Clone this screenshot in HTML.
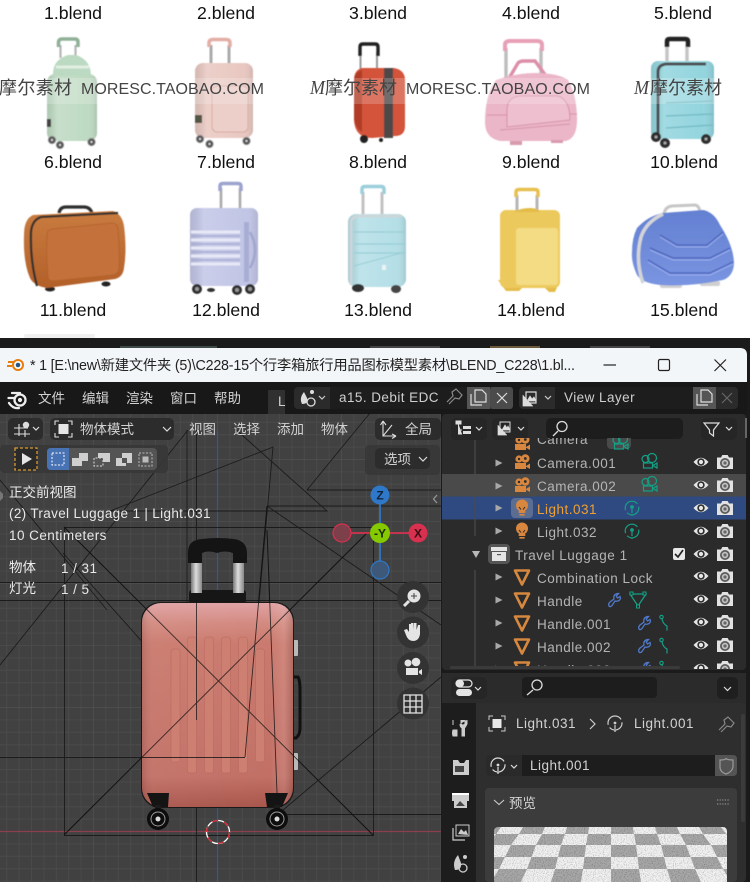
<!DOCTYPE html>
<html lang="zh"><head><meta charset="utf-8"><title>Blend</title>
<style>
html,body{margin:0;padding:0;background:#fff;width:750px;height:882px;overflow:hidden}
svg{display:block}
.lb{font:17.7px "Liberation Sans","Noto Sans CJK SC",sans-serif;fill:#111;text-anchor:middle}
.wm{font-family:"Liberation Sans","Noto Sans CJK SC",sans-serif;fill:#444}
.ui{font-family:"Liberation Sans","Noto Sans CJK SC",sans-serif;font-size:13.5px;fill:#cfcfcf;letter-spacing:.45px}
.cn{font-family:"Noto Sans CJK SC","Liberation Sans",sans-serif;font-size:13.5px;fill:#d2d2d2}
.ov{font-family:"Liberation Sans","Noto Sans CJK SC",sans-serif;font-size:13.5px;fill:#e8e8e8;letter-spacing:.45px}
.row{font-family:"Liberation Sans",sans-serif;font-size:13.5px;fill:#b4b4b4;letter-spacing:.5px}
</style></head><body>
<svg width="750" height="882" viewBox="0 0 750 882" xmlns="http://www.w3.org/2000/svg">
<defs>
<pattern id="grid" width="124" height="124" patternUnits="userSpaceOnUse" x="93.500" y="87.500">
 <rect width="124" height="124" fill="#414141"/>
 <path d="M12.400 0V124M24.800 0V124M37.200 0V124M49.600 0V124M62 0V124M74.400 0V124M86.800 0V124M99.200 0V124M111.600 0V124M0 12.400H124M0 24.800H124M0 37.200H124M0 49.600H124M0 62H124M0 74.400H124M0 86.800H124M0 99.200H124M0 111.600H124" stroke="#4a4a4a" stroke-width="1" fill="none"/>
 <path d="M0 0V124M0 0H124" stroke="#565656" stroke-width="1" fill="none"/>
</pattern>
<linearGradient id="gBody" x1="0" y1="0" x2="0" y2="1"><stop offset="0" stop-color="#e0a2a4"/><stop offset=".1" stop-color="#d38a80"/><stop offset=".2" stop-color="#ca7a6e"/><stop offset=".85" stop-color="#c27066"/><stop offset="1" stop-color="#a9564c"/></linearGradient>
<linearGradient id="gSide" x1="0" y1="0" x2="1" y2="0"><stop offset="0" stop-color="#000" stop-opacity=".1"/><stop offset=".07" stop-color="#fff" stop-opacity=".04"/><stop offset=".85" stop-color="#fff" stop-opacity="0"/><stop offset=".94" stop-color="#fff" stop-opacity=".1"/><stop offset="1" stop-color="#000" stop-opacity=".12"/></linearGradient>
<linearGradient id="gPole" x1="0" y1="0" x2="1" y2="0"><stop offset="0" stop-color="#777"/><stop offset=".45" stop-color="#ddd"/><stop offset="1" stop-color="#888"/></linearGradient>
<linearGradient id="shade" x1="0" y1="0" x2="1" y2="0"><stop offset="0" stop-color="#000" stop-opacity=".08"/><stop offset=".2" stop-color="#fff" stop-opacity=".14"/><stop offset=".8" stop-color="#fff" stop-opacity="0"/><stop offset="1" stop-color="#000" stop-opacity=".1"/></linearGradient>
<linearGradient id="gBrown" x1="0" y1="0" x2="0" y2="1"><stop offset="0" stop-color="#c97c3f"/><stop offset="1" stop-color="#b3602a"/></linearGradient>
<linearGradient id="gBlue" x1="0" y1="0" x2="0" y2="1"><stop offset="0" stop-color="#6480d2"/><stop offset=".5" stop-color="#6e8ad8"/><stop offset="1" stop-color="#7a95e2"/></linearGradient>
<filter id="soft"><feGaussianBlur stdDeviation=".45"/></filter>
<filter id="noise" x="0" y="0" width="100%" height="100%" color-interpolation-filters="sRGB"><feTurbulence type="fractalNoise" baseFrequency=".9" numOctaves="1" seed="3" result="t"/><feColorMatrix in="t" values=".7 0 0 0 .62 .7 0 0 0 .62 .7 0 0 0 .62 0 0 0 0 1" result="g"/><feBlend in="g" in2="SourceGraphic" mode="multiply"/></filter>
<clipPath id="prev"><rect x="494" y="827" width="233" height="60" rx="4"/></clipPath>
<clipPath id="outl"><rect x="442" y="438" width="304" height="231"/></clipPath>

<g id="eye"><path d="M-7.500 0Q0-8.500 7.500 0Q0 8.500-7.500 0Z" fill="#e6e6e6"/><circle r="3.700" fill="#2c2c2c"/><circle r="2.100" fill="#e6e6e6"/></g>
<g id="cam"><path d="M-8-4.500H-4L-2.700-7H2.700L4-4.500H8V7H-8Z" fill="#e2e2e2"/><circle cy="1" r="5" fill="#5c5c5c"/><circle cy="1" r="3.200" fill="#c4c4c4"/><circle cy="1" r="1.600" fill="#666"/></g>
<g id="cami"><circle cx="-3" cy="-4" r="3.600" fill="#d9873f"/><circle cx="3.300" cy="-4.500" r="4.200" fill="#d9873f"/><circle cx="-3" cy="-4" r="1.200" fill="#2b2b2b"/><circle cx="3.300" cy="-4.500" r="1.400" fill="#2b2b2b"/><rect x="-7" y="0" width="11" height="6" fill="#d9873f"/><path d="M4 3L8 .5V6L4 3.800Z" fill="#d9873f"/></g>
<g id="camg" fill="none" stroke="#14a085" stroke-width="1.200"><circle cx="-3.500" cy="-3" r="3.500"/><circle cx="3" cy="-4" r="4.500"/><rect x="-5.500" y="1" width="9" height="5"/><path d="M4 3.500L8 1V6Z"/></g>
<g id="mesh"><path d="M-7-6.500H7L0 7.500Z" fill="none" stroke="#d6883f" stroke-width="2.600" stroke-linejoin="round"/></g>
<g id="bulb"><circle cy="-2.500" r="6" fill="#d9873f"/><path d="M-3-1L-1 1.500M3-1L1 1.500" stroke="#2b2b2b" stroke-width="1"/><rect x="-3.300" y="3" width="6.600" height="2" fill="#d9873f"/><rect x="-2.600" y="6" width="5.200" height="1.600" fill="#d9873f"/></g>
<g id="lightg" fill="none" stroke="#14a085" stroke-width="1.200"><circle r="6.800" stroke-dasharray="16 3 19 3"/><circle cy="-1" r="1.300" fill="#14a085"/><path d="M0 1V5M0 6.500V8"/></g>
<g id="wrench"><path d="M-6 6Q-7 4-5 2L-1-1Q-2-5 2-6.500L3.500-6.500 1.200-4 2.500-2 5-3.500 5.500-1.500Q4 2 0 1L-3 5.500Q-5 7.500-6 6Z" fill="none" stroke="#5079c9" stroke-width="1.300"/></g>
<g id="curve"><circle cx="-2.500" cy="-6" r="1.700" fill="none" stroke="#14a085" stroke-width="1.100"/><path d="M-2-4Q-1 1 3 3V7.500" fill="none" stroke="#14a085" stroke-width="1.200"/></g>
<g id="arrow"><path d="M-3.500-3.500L3.500 0L-3.500 3.500Z" fill="#a8a8a8"/></g>
<g id="wh"><circle r="3.600" fill="#4d4d4d" stroke="#8a8a8a" stroke-width="1"/><circle r="1.200" fill="#d5d5d5"/></g>
</defs>

<rect width="750" height="338" fill="#fff"/>
<text class="lb" x="73" y="19">1.blend</text><text class="lb" x="226" y="19">2.blend</text><text class="lb" x="378" y="19">3.blend</text><text class="lb" x="531" y="19">4.blend</text><text class="lb" x="683" y="19">5.blend</text>

<g filter="url(#soft)">
<!-- 6 green -->
<g>
<path d="M60.500 58V45M75.500 58V45" stroke="#b5b5b5" stroke-width="2.200"/>
<path d="M58.500 47V42Q59 39 62 39H75Q78 39 78 42V47" fill="none" stroke="#8fb097" stroke-width="3.500"/>
<rect x="47" y="74" width="50" height="67" rx="8" fill="#bedac2"/>
<rect x="47" y="74" width="50" height="67" rx="8" fill="url(#shade)"/>
<path d="M53 76Q52 60 68 55H76Q91 60 91 76Z" fill="#bcd9c2"/><path d="M56 67H89" stroke="#e2efe3" stroke-width="3"/>
<use href="#wh" x="52" y="140"/><use href="#wh" x="60" y="145"/><use href="#wh" x="91.500" y="142"/>
<rect x="47" y="119" width="4" height="8" fill="#444"/>
</g>
<!-- 7 pink -->
<g>
<path d="M211 64V45M229 64V45" stroke="#aaa" stroke-width="3"/><path d="M209 47V43Q209 39.500 213 39.500H226Q230 39.500 230 43V47" fill="none" stroke="#e3aea5" stroke-width="3.500"/>
<rect x="195" y="63" width="58" height="75" rx="8" fill="#e9c8c1"/><rect x="195" y="63" width="58" height="75" rx="8" fill="url(#shade)"/>
<rect x="212" y="86" width="36" height="46" rx="5" fill="#eccfc9" stroke="#d9aaa3"/>
<use href="#wh" x="200" y="139"/><use href="#wh" x="209.500" y="144"/><use href="#wh" x="246.500" y="141"/>
<rect x="195" y="115" width="7" height="8" fill="#554"/>
</g>
<!-- 8 red -->
<g>
<path d="M360.500 72V52M377 72V52" stroke="#999" stroke-width="2"/>
<path d="M360 56V47Q360 44 363 44H375Q378 44 378 47V56" fill="none" stroke="#222" stroke-width="3.400"/>
<path d="M362 68H394Q405 70 405 80V126Q405 136 395 136L372 138Q355 138 354 120V80Q354 70 362 68Z" fill="#d4523a"/>
<rect x="384" y="68" width="9" height="70" fill="#4d4a48"/>
<path d="M354 82Q354 72 362 70V132Q355 128 354 118Z" fill="#b13c27"/>
<circle cx="364" cy="139" r="4" fill="#222"/><circle cx="381" cy="140" r="2" fill="#222"/>
</g>
<!-- 9 bag -->
<g>
<path d="M506 82V48M541 82V48" stroke="#bdbdbd" stroke-width="3.400"/>
<path d="M505 51V45Q505 41 510 41H537Q542 41 542 45V51" fill="none" stroke="#e7a0b6" stroke-width="4"/>
<path d="M508 80L518 63Q520 61 524 61H535L549 80" fill="none" stroke="#dc8fa8" stroke-width="3.400"/>
<path d="M496 80Q516 73 535 73Q558 73 568 80Q577 95 577 120Q577 138 566 141H500Q485 138 485 122Q485 95 496 80Z" fill="#ebb6c8"/>
<path d="M507 127V110Q507 95 525 96H558Q570 100 570 120L507 127Z" fill="#eebfce" stroke="#d693a9"/>
<path d="M487 115H507M569 114H577M500 130L570 124" stroke="#d693a9" fill="none"/>
<rect x="510" y="141" width="12" height="4" fill="#d89bae"/><rect x="551" y="140" width="12" height="3" fill="#d89bae"/>
</g>
<!-- 10 teal -->
<g>
<path d="M667 62V44M687 62V44" stroke="#c5c5c5" stroke-width="3.400"/>
<path d="M667 47V41Q667 39 670 39H685Q688 39 688 41V47" fill="none" stroke="#222" stroke-width="4.500"/>
<rect x="651" y="61" width="63" height="78" rx="7" fill="#93d5de"/><rect x="651" y="61" width="63" height="78" rx="7" fill="url(#shade)"/>
<path d="M658 136V72Q658 65 666 64H706" fill="none" stroke="#4d5052" stroke-width="3"/>
<path d="M666 103L713 101M666 116L713 114M666 128L713 125" stroke="#72b9c3" stroke-width="1.300" fill="none"/>
<g fill="#2d2d2d"><circle cx="656" cy="137" r="5"/><circle cx="665" cy="143" r="5"/><circle cx="706" cy="139" r="5"/></g><g fill="#aaa"><circle cx="656" cy="137" r="1.500"/><circle cx="665" cy="143" r="1.500"/><circle cx="706" cy="139" r="1.500"/></g>
</g>
<!-- 11 brown -->
<g>
<ellipse cx="50" cy="289" rx="5" ry="2.500" fill="#222"/><ellipse cx="106" cy="284" rx="4.500" ry="2.500" fill="#222"/>
<path d="M59 213Q60 207 66 207H84Q90 207 92 213" fill="none" stroke="#2e2e2e" stroke-width="3.200"/>
<path d="M33 215Q24 219 24 235Q23 262 30 278Q34 286 47 288L115 279Q123 277 124 268Q127 250 124 226Q122 214 113 211Z" fill="url(#gBrown)"/>
<path d="M37 286Q30 260 31 232Q32 220 41 217L118 213" fill="none" stroke="#33302e" stroke-width="2.300"/>
<path d="M52 229L112 223Q117 223 118 228Q120 250 119 270Q118 274 113 275L53 281Q48 281 48 277Q46 255 47 234Q47 230 52 229Z" fill="#c4713a" stroke="#b06029" stroke-width=".8"/>
</g>
<!-- 12 lavender -->
<g>
<path d="M221 208V188M240 208V188" stroke="#aaa" stroke-width="2.600"/><path d="M220 191V186Q220 183.500 223 183.500H238Q241 183.500 241 186V191" fill="none" stroke="#9da3cf" stroke-width="3.500"/>
<rect x="190" y="208" width="68" height="78" rx="7" fill="#c2c6e6"/>
<rect x="190" y="208" width="68" height="78" rx="7" fill="url(#shade)"/>
<path d="M191 232H240M191 240H240M191 248H240M191 256H240M191 264H240" stroke="#e6e8f6" stroke-width="3"/>
<path d="M191 236H240M191 244H240M191 252H240M191 260H240" stroke="#a5aad2" stroke-width="1.200"/>
<rect x="244" y="222" width="5" height="60" fill="#a8add4"/><path d="M250 232Q260 250 250 268" fill="none" stroke="#a0a6cf" stroke-width="2.500"/>
<g fill="#2e2e2e"><circle cx="197" cy="289" r="5"/><circle cx="237" cy="290" r="5"/><circle cx="250" cy="289" r="5"/></g><g fill="#999"><circle cx="197" cy="289" r="2"/><circle cx="237" cy="290" r="2"/><circle cx="250" cy="289" r="2"/></g>
<ellipse cx="211" cy="290" rx="4" ry="2" fill="#333"/>
</g>
<!-- 13 light blue -->
<g>
<path d="M363 215V192M382 215V192" stroke="#c2c2c2" stroke-width="3"/><path d="M362 194V189Q362 186.500 365 186.500H381Q384 186.500 384 189V194" fill="none" stroke="#9bcfdc" stroke-width="3.500"/>
<rect x="348" y="214" width="58" height="73" rx="8" fill="#b5dfe7"/><rect x="348" y="214" width="58" height="73" rx="8" fill="url(#shade)"/>
<path d="M351 285V222Q352 216 360 216H402" fill="none" stroke="#cfd6d8" stroke-width="2.500"/>
<path d="M354 232H405M354 244H405M354 253H405" stroke="#98cdd6" stroke-width="1.200" fill="none"/><path d="M354 266L405 252" stroke="#98cdd6" fill="none"/>
<rect x="382" y="265" width="4" height="5" fill="#eaf3f5"/>
<ellipse cx="358" cy="288" rx="6" ry="4" fill="#333"/><ellipse cx="396" cy="289" rx="5" ry="4" fill="#444"/>
</g>
<!-- 14 yellow -->
<g>
<path d="M517 212V195M537 212V195" stroke="#b6b6b6" stroke-width="3"/><path d="M516 197V192Q516 189.500 519 189.500H535Q538 189.500 538 192V197" fill="none" stroke="#e8c050" stroke-width="3.500"/>
<path d="M498 280L506 291H519L522 288H545L549 292H555L558 285Z" fill="#e3bc4a"/>
<rect x="500" y="210" width="60" height="78" rx="6" fill="#ecc95b"/>
<rect x="516" y="228" width="42" height="57" rx="3" fill="#f4dc84"/>
<path d="M514 212Q520 208 530 208Q538 208 540 212" fill="#e3bc4a"/>
</g>
<!-- 15 blue -->
<g>
<rect x="660" y="283" width="22" height="5" rx="2" fill="#cfcfcf"/><rect x="700" y="281" width="20" height="5" rx="2" fill="#cfcfcf"/>
<path d="M664 216Q664 207 672 206L695 205Q700 206 700 214" fill="none" stroke="#c6c6c6" stroke-width="3"/>
<path d="M663 213L703 210Q714 212 720 225Q733 245 734 262Q734 276 723 280Q690 287 660 285Q642 283 637 275Q631 262 632 252Q632 238 637 228Q648 216 663 213Z" fill="url(#gBlue)"/>
<path d="M663 214Q646 222 641 237Q635 260 643 283" fill="none" stroke="#d2d4d8" stroke-width="3.500"/>
<path d="M660 235L677 245H707L723 232" fill="none" stroke="#5168bf" stroke-width="1.500"/>
<path d="M650 248L673 258H710L730 248" fill="none" stroke="#5168bf" stroke-width="1.500"/>
<path d="M648 260L670 273H710L733 262" fill="none" stroke="#5168bf" stroke-width="1.500"/>
<path d="M650 250L673 260H710L730 250M648 262L670 275H710L733 264M660 237L677 247H707L723 234" fill="none" stroke="#9cb0ee" stroke-width="1"/>
</g>
</g>
<rect x="0" y="78" width="750" height="26" fill="#fff" opacity=".2"/>

<text class="lb" x="73" y="168">6.blend</text><text class="lb" x="226" y="168">7.blend</text><text class="lb" x="378" y="168">8.blend</text><text class="lb" x="531" y="168">9.blend</text><text class="lb" x="684" y="168">10.blend</text>
<text class="lb" x="73" y="316">11.blend</text><text class="lb" x="226" y="316">12.blend</text><text class="lb" x="378" y="316">13.blend</text><text class="lb" x="531" y="316">14.blend</text><text class="lb" x="684" y="316">15.blend</text>

<!-- watermark -->
<text class="wm" x="-1" y="94" font-size="18" textLength="73">摩尔素材</text>
<text class="wm" x="81" y="94" font-size="16" textLength="183">MORESC.TAOBAO.COM</text>
<text x="310" y="94" font-family="Liberation Serif,serif" font-style="italic" font-size="20" fill="#444" textLength="15" lengthAdjust="spacingAndGlyphs">M</text>
<text class="wm" x="325" y="94" font-size="18" textLength="72">摩尔素材</text>
<text class="wm" x="406" y="94" font-size="16" textLength="184">MORESC.TAOBAO.COM</text>
<text x="634" y="94" font-family="Liberation Serif,serif" font-style="italic" font-size="20" fill="#444" textLength="15" lengthAdjust="spacingAndGlyphs">M</text>
<text class="wm" x="650" y="94" font-size="18" textLength="72">摩尔素材</text>

<!-- window -->
<rect x="24" y="334" width="71" height="4" rx="2" fill="#f0f0f0"/>
<rect y="338" width="750" height="544" fill="#1b1b1b"/>
<rect x="120" y="346" width="97" height="2" fill="#3d4a48"/><rect x="370" y="346" width="70" height="2" fill="#444"/><rect x="490" y="346" width="50" height="2" fill="#6d5a3a"/><rect x="590" y="346" width="60" height="2" fill="#444"/>
<path d="M0 348H740Q747 348 747 355V382H0Z" fill="#f3f6f8"/>
<g>
<circle cx="18" cy="365" r="6" fill="#e87d0d"/><circle cx="18" cy="365" r="4" fill="#fff"/><circle cx="18" cy="365" r="2.300" fill="#265787"/><path d="M8 362H14M7 366H12" stroke="#e87d0d" stroke-width="2"/>
</g>
<text x="30" y="370" font-family="Liberation Sans,Noto Sans CJK SC,sans-serif" font-size="14.3" fill="#222" textLength="545">* 1 [E:\new\新建文件夹 (5)\C228-15个行李箱旅行用品图标模型素材\BLEND_C228\1.bl...</text>
<path d="M603.500 365H616" stroke="#222" stroke-width="1.200"/><rect x="658.500" y="359.500" width="11" height="11" rx="1.500" fill="none" stroke="#222" stroke-width="1.200"/><path d="M714.500 359.500L726 371M726 359.500L714.500 371" stroke="#222" stroke-width="1.200"/>

<!-- topbar -->
<rect y="382" width="747" height="32" fill="#181818"/><rect x="747" y="348" width="3" height="534" fill="#1a1a1a"/>
<circle cx="20" cy="400" r="5.500" fill="none" stroke="#eee" stroke-width="2.300"/><circle cx="20" cy="400" r="2.100" fill="#eee"/><path d="M12 393H20M8.500 398H15M9 403Q13 409 19 408" fill="none" stroke="#eee" stroke-width="2.300" stroke-linecap="round"/>
<text class="cn" x="38" y="403">文件</text><text class="cn" x="82" y="403">编辑</text><text class="cn" x="126" y="403">渲染</text><text class="cn" x="170" y="403">窗口</text><text class="cn" x="214" y="403">帮助</text>
<rect x="268" y="390" width="17" height="24" fill="#303030"/><text class="ui" x="278" y="406" font-size="12">L</text>
<rect x="294" y="387" width="219" height="22" rx="4" fill="#2b2b2b"/>
<rect x="330" y="387" width="137" height="22" fill="#1d1d1d"/>
<rect x="467" y="387" width="23" height="22" fill="#555"/><rect x="490" y="387" width="23" height="22" rx="3" fill="#4b4b4b"/>
<text class="ui" x="339" y="402" textLength="100">a15.  Debit EDC</text>
<path d="M302 404Q299 398 304 392L307 398Q309 404 302 404Z" fill="#ddd"/><circle cx="312" cy="392" r="2" fill="#ddd"/><circle cx="311" cy="402" r="4" fill="none" stroke="#ddd" stroke-width="1.300"/><path d="M319 396L322 399 325 396" fill="none" stroke="#ccc" stroke-width="1.200"/>
<path d="M447 402L453 396 452 392 456 389 462 395 459 399 455 398 449 404" fill="none" stroke="#8b8b8b" stroke-width="1.200"/>
<path d="M471 394V405H482M475 390H482L486 394V402H475Z" fill="none" stroke="#ddd" stroke-width="1.200"/><path d="M497 393L507 403M507 393L497 403" stroke="#ddd" stroke-width="1.200"/>
<rect x="519" y="387" width="219" height="22" rx="4" fill="#2b2b2b"/>
<rect x="555" y="387" width="138" height="22" fill="#1d1d1d"/>
<rect x="693" y="387" width="23" height="22" fill="#555"/>
<path d="M526 392H536V403H526Z" fill="#2b2b2b" stroke="#ddd" stroke-width="1.200"/><path d="M523 395V406H533M527 401L530 396 532 399 534 397 536 401Z" fill="#ddd" stroke="#ddd" stroke-width=".7"/><path d="M545 396L548 399 551 396" fill="none" stroke="#ccc" stroke-width="1.200"/>
<text class="ui" x="564" y="402">View Layer</text>
<path d="M697 394V405H708M701 390H708L712 394V402H701Z" fill="none" stroke="#ddd" stroke-width="1.200"/><path d="M722 393L732 403M732 393L722 403" stroke="#666" stroke-width="1.200"/>

<!-- viewport -->
<rect y="414" width="441" height="468" fill="url(#grid)"/>
<path d="M217.500 430V882" stroke="#2e5a95" stroke-width="1.200"/>
<path d="M0 831.500H441" stroke="#8c3f4d" stroke-width="1.200"/>
<g fill="none" stroke="#0f0f0f" stroke-width=".9" opacity=".75">
<path d="M64.500 527.500H373.500V835.500H64.500Z"/>
<path d="M64 835L367 533M64 527L373 835"/>
<path d="M0 665L188 430M110 511L273 447L245 757.500H0M307 490L370 413M307 490H441M233 427L327 511H110M267 506H441M267 506L441 625M267 506L245 757.500"/>
<path d="M187 430V620M196.500 430V882M267 530L277 793M0 582.500H441M0 600.500H441M287 814.500H441M283 810L441 677M63 553L245 757M0 480L107 610"/>
</g>

<!-- main suitcase -->
<rect x="189" y="590" width="57" height="14" rx="3" fill="#161616"/>
<rect x="191" y="563" width="11" height="30" fill="url(#gPole)"/><rect x="233" y="563" width="11" height="30" fill="url(#gPole)"/>
<path d="M188 563V552Q188 540 202 539Q217 537 234 539Q247 541 247 553V563H233V553Q225 550 217 553 208 550 202 553V563Z" fill="#141414"/>
<path d="M293 677H298Q300 680 300 690V728Q300 735 296 738H293" fill="none" stroke="#111" stroke-width="3"/>
<rect x="291" y="640" width="7" height="16" rx="1" fill="#b9b9b9"/><rect x="291" y="753" width="7" height="17" rx="1" fill="#b9b9b9"/>
<rect x="141" y="602" width="153" height="206" rx="19" fill="#1a1a1a"/>
<rect x="142" y="603" width="151" height="204" rx="19" fill="url(#gBody)"/>
<rect x="142" y="603" width="151" height="204" rx="19" fill="url(#gSide)"/>
<g fill="#cd7f72" stroke="#b8665c" stroke-width=".5">
<rect x="171" y="649" width="9" height="113" rx="2.500"/><rect x="187.500" y="637" width="9" height="136" rx="2.500"/><rect x="204.500" y="637" width="9" height="136" rx="2.500"/><rect x="221.500" y="637" width="9" height="136" rx="2.500"/><rect x="238.500" y="637" width="9" height="136" rx="2.500"/><rect x="255.500" y="649" width="9" height="113" rx="2.500"/>
</g>
<path d="M147 793H169L168 807H153Z" fill="#141414"/><path d="M265 793H288L282 807H267Z" fill="#141414"/>
<path d="M158 805V815M277 805V815" stroke="#1b1b1b" stroke-width="6"/>
<g><circle cx="158" cy="819" r="11" fill="#0d0d0d"/><circle cx="158" cy="819" r="7" fill="none" stroke="#9a9a9a"/><circle cx="158" cy="819" r="2.500" fill="#ddd"/>
<circle cx="277" cy="819" r="11" fill="#0d0d0d"/><circle cx="277" cy="819" r="7" fill="none" stroke="#9a9a9a"/><circle cx="277" cy="819" r="2.500" fill="#ddd"/></g>
<g fill="none" stroke="#111" stroke-width=".9" opacity=".8">
<path d="M64 835L367 533M64 527L373 835M267 530L277 793M196.500 600V720M245 757.500H142M267 506L245 757"/>
</g>
<circle cx="218" cy="832" r="11.500" fill="none" stroke="#fff" stroke-width="1.300"/><circle cx="218" cy="832" r="11.500" fill="none" stroke="#d4202a" stroke-width="1.300" stroke-dasharray="6 6"/>

<!-- viewport UI -->
<rect x="0" y="445" width="168" height="28" rx="4" fill="#373737" opacity=".9"/>
<rect x="365" y="445" width="75" height="30" rx="4" fill="#373737" opacity=".9"/>
<rect x="8" y="418" width="35" height="22" rx="5" fill="#2c2c2c"/>
<circle cx="26" cy="425" r="3.200" fill="#ddd"/><path d="M14 428H28M19 424V436M14 434H30M25 430V437" stroke="#ddd" stroke-width="1.100"/><path d="M33 427L36 430 39 427" fill="none" stroke="#ddd" stroke-width="1.200"/>
<rect x="50" y="418" width="124" height="22" rx="5" fill="#2c2c2c"/>
<path d="M55 425V421H59M68 421H72V425M72 433V437H68M59 437H55V433" fill="none" stroke="#ddd" stroke-width="1.100"/><rect x="58.500" y="424" width="10" height="10" fill="#e6e6e6"/>
<text class="cn" x="80" y="434">物体模式</text><path d="M163 427L167 431 171 427" fill="none" stroke="#ddd" stroke-width="1.200"/>
<text class="cn" x="189" y="434">视图</text><text class="cn" x="233" y="434">选择</text><text class="cn" x="277" y="434">添加</text><text class="cn" x="321" y="434">物体</text>
<rect x="375" y="418" width="66" height="22" rx="5" fill="#2c2c2c"/>
<path d="M383 421V436H396M383 421L380.500 425M383 421L386 425M396 436L392 434M396 436L392 438.500M383 436L392 425" fill="none" stroke="#ddd" stroke-width="1.100"/>
<text class="cn" x="405" y="434">全局</text>
<rect x="15" y="448" width="22" height="22" fill="#2a2a2a" stroke="#d89a2c" stroke-width="1.300" stroke-dasharray="3 2"/><path d="M22 453L32 459 22 465Z" fill="#e6e6e6"/>
<rect x="47" y="448" width="110" height="22" rx="4" fill="#545454"/><path d="M51 448H69V470H51Q47 470 47 466V452Q47 448 51 448Z" fill="#4772b3"/>
<rect x="52" y="453" width="12" height="12" fill="none" stroke="#fff" stroke-dasharray="2 1.500"/>
<path d="M72 458H79V453H88V461H82V466H72Z" fill="#cfcfcf"/>
<path d="M101 458H94V466H103V458H103" fill="none" stroke="#ddd" stroke-dasharray="2 1.500"/><path d="M98 453H110V462H103V458H98Z" fill="#cfcfcf"/>
<path d="M116 458H122V453H132V463H126V466H116Z" fill="#cfcfcf"/><rect x="122" y="458" width="5" height="5" fill="#545454"/>
<rect x="139" y="453" width="13" height="13" fill="none" stroke="#bbb" stroke-dasharray="2 1.500"/><rect x="142.500" y="456.500" width="6" height="6" fill="#bbb"/>
<rect x="375" y="448" width="55" height="21" rx="5" fill="#2c2c2c"/><text class="cn" x="384" y="464">选项</text><path d="M419 457L423 461 427 457" fill="none" stroke="#ddd" stroke-width="1.200"/>
<path d="M3 494L0 491V501L3 498Z" fill="#777"/><path d="M437 495L433.500 499 437 503" fill="none" stroke="#999" stroke-width="1.200"/>
<text class="cn" x="9" y="497" style="fill:#ececec">正交前视图</text>
<text class="ov" x="9" y="518" textLength="202">(2) Travel Luggage 1 | Light.031</text>
<text class="ov" x="9" y="540">10 Centimeters</text>
<text class="cn" x="9" y="572" style="fill:#ececec">物体</text><text class="ov" x="61" y="573">1 / 31</text>
<text class="cn" x="9" y="593" style="fill:#ececec">灯光</text><text class="ov" x="61" y="594">1 / 5</text>
<!-- gizmo -->
<path d="M380 504V524M380 543V561" stroke="#2f78c9" stroke-width="1.700"/><path d="M351 533H370M390 533H409" stroke="#d8304f" stroke-width="1.700"/>
<circle cx="380" cy="495" r="9.500" fill="#2f78c9"/><text x="380" y="499.500" font-family="Liberation Sans,sans-serif" font-weight="700" font-size="12" fill="#10243c" text-anchor="middle">Z</text>
<circle cx="380" cy="533" r="10" fill="#85c900"/><text x="380" y="537.500" font-family="Liberation Sans,sans-serif" font-weight="700" font-size="12" fill="#1c2a00" text-anchor="middle">-Y</text>
<circle cx="418" cy="533" r="9.500" fill="#d8304f"/><text x="418" y="537.500" font-family="Liberation Sans,sans-serif" font-weight="700" font-size="12" fill="#3c0a14" text-anchor="middle">X</text>
<circle cx="342" cy="533" r="9" fill="#7d3f49" stroke="#d8304f" stroke-width="1.200"/><circle cx="380" cy="570" r="9" fill="#3d5878" stroke="#2f78c9" stroke-width="1.200"/>
<!-- nav -->
<g fill="#333"><circle cx="413" cy="597" r="16"/><circle cx="413" cy="632.500" r="16"/><circle cx="413" cy="668" r="16"/><circle cx="413" cy="703.500" r="16"/></g>
<circle cx="414" cy="596" r="6.500" fill="#e4e4e4"/><path d="M409 601L404 606" stroke="#e4e4e4" stroke-width="3"/><path d="M414 593V599M411 596H417" stroke="#444" stroke-width="1"/>
<path d="M406 635L404 630 407 629 409 632V624H411V630 411 623H413.500V630L414 623H416.500V630L418 625H420V634Q419 641 413 641 408 641 406 635Z" fill="#e4e4e4"/>
<circle cx="408" cy="663" r="3.500" fill="#e4e4e4"/><circle cx="416" cy="662" r="4.300" fill="#e4e4e4"/><rect x="406" y="668" width="12" height="7" fill="#e4e4e4"/><path d="M419 671L422 669V675L419 673Z" fill="#e4e4e4"/>
<path d="M404 695H422V713H404ZM410 695V713M416 695V713M404 701H422M404 707H422" fill="none" stroke="#e4e4e4" stroke-width="1.300"/>

<!-- outliner -->
<rect x="441" y="414" width="306" height="468" fill="#1b1b1b"/>
<rect x="442" y="414" width="304" height="256" rx="4" fill="#2b2b2b"/>
<rect x="451" y="418" width="36" height="22" rx="5" fill="#262626"/>
<path d="M456 421H461V424H456ZM458.500 424V434H462M458.500 430H462" stroke="#ddd" fill="#ddd"/><rect x="463" y="426" width="8" height="3" fill="#ddd"/><rect x="463" y="431" width="8" height="3" fill="#ddd"/><path d="M476 427L479 430 482 427" fill="none" stroke="#ddd" stroke-width="1.200"/>
<rect x="492" y="418" width="36" height="22" rx="5" fill="#262626"/>
<path d="M500 422H510V432H500Z" fill="#262626" stroke="#ddd"/><path d="M498 425V435H507M502 430L505 425 507 428 508 426 510 430Z" fill="#ddd" stroke="#ddd" stroke-width=".7"/><path d="M518 427L521 430 524 427" fill="none" stroke="#ddd" stroke-width="1.200"/>
<rect x="546" y="418" width="137" height="21" rx="5" fill="#1d1d1d"/>
<circle cx="562" cy="426.500" r="5" fill="none" stroke="#ddd" stroke-width="1.300"/><path d="M558 431L553 436" stroke="#ddd" stroke-width="1.300"/>
<rect x="701" y="418" width="36" height="22" rx="5" fill="#262626"/>
<path d="M704 423H719L713.500 430V436L709.500 433V430Z" fill="none" stroke="#ddd" stroke-width="1.200"/><path d="M726 427L729 430 732 427" fill="none" stroke="#ddd" stroke-width="1.200"/>
<rect x="745" y="418" width="2" height="20" fill="#666"/>
<g clip-path="url(#outl)">
<rect x="442" y="474" width="304" height="22.500" fill="#4a4a4a"/>
<rect x="442" y="496.500" width="304" height="23" fill="#2f4a80"/>
<path d="M475 440V536M475 570V670" stroke="#4a4a4a" stroke-width="1.200"/>
<use href="#cami" x="522" y="444"/><text class="row" x="537" y="444">Camera</text><rect x="607" y="435" width="24" height="14" rx="4" fill="#4a4a4a"/><use href="#camg" x="620" y="443"/>
<use href="#cami" x="522" y="463"/><use href="#cami" x="522" y="486"/>
<rect x="511" y="498" width="22" height="20" rx="4" fill="#5b6e92"/>
<use href="#bulb" x="522" y="508"/><use href="#bulb" x="522" y="531"/>
<use href="#arrow" x="499" y="463"/><use href="#arrow" x="499" y="486"/><use href="#arrow" x="499" y="508"/><use href="#arrow" x="499" y="531"/>
<text class="row" x="537" y="468">Camera.001</text><text class="row" x="537" y="491">Camera.002</text><text class="row" x="537" y="514" style="fill:#f0a030">Light.031</text><text class="row" x="537" y="537">Light.032</text>
<use href="#camg" x="649" y="462"/><use href="#camg" x="649" y="485"/><use href="#lightg" x="632" y="508"/><use href="#lightg" x="632" y="531"/>
<path d="M476 551L472 551 476 558 480 551Z" fill="#b8b8b8"/>
<rect x="488" y="544" width="22" height="20" rx="4" fill="#555"/><rect x="491" y="547" width="16" height="4" fill="#e4e4e4"/><rect x="492" y="552" width="14" height="9" fill="#e4e4e4"/><rect x="497" y="554" width="4" height="1.200" fill="#555"/>
<text class="row" x="515" y="560">Travel Luggage 1</text>
<rect x="673" y="548" width="12" height="12" rx="2" fill="#e8e8e8"/><path d="M675 554L678 557 683 550" fill="none" stroke="#222" stroke-width="1.700"/>
<use href="#mesh" x="522" y="577"/><use href="#mesh" x="522" y="600"/><use href="#mesh" x="522" y="623"/><use href="#mesh" x="522" y="646"/><use href="#mesh" x="522" y="669"/>
<use href="#arrow" x="499" y="577"/><use href="#arrow" x="499" y="600"/><use href="#arrow" x="499" y="623"/><use href="#arrow" x="499" y="646"/><use href="#arrow" x="499" y="669"/>
<text class="row" x="537" y="583">Combination Lock</text><text class="row" x="537" y="606">Handle</text><text class="row" x="537" y="629">Handle.001</text><text class="row" x="537" y="652">Handle.002</text><text class="row" x="537" y="675">Handle.003</text>
<use href="#wrench" x="615" y="600"/><path d="M630 594H646L638 606Z" fill="none" stroke="#14a085" stroke-width="1.300"/><g fill="#2b2b2b" stroke="#14a085"><rect x="630" y="592" width="3" height="3"/><rect x="643" y="592" width="3" height="3"/><rect x="636.500" y="605" width="3" height="3"/></g>
<use href="#wrench" x="645" y="623"/><use href="#curve" x="664" y="623"/><use href="#wrench" x="645" y="646"/><use href="#curve" x="664" y="646"/><use href="#wrench" x="645" y="669"/><use href="#curve" x="664" y="669"/>
<g>
<use href="#eye" x="701" y="462"/><use href="#cam" x="725" y="462"/><use href="#eye" x="701" y="485"/><use href="#cam" x="725" y="485"/><use href="#eye" x="701" y="508"/><use href="#cam" x="725" y="508"/><use href="#eye" x="701" y="531"/><use href="#cam" x="725" y="531"/><use href="#eye" x="701" y="554"/><use href="#cam" x="725" y="554"/><use href="#eye" x="701" y="576"/><use href="#cam" x="725" y="576"/><use href="#eye" x="701" y="599"/><use href="#cam" x="725" y="599"/><use href="#eye" x="701" y="622"/><use href="#cam" x="725" y="622"/><use href="#eye" x="701" y="645"/><use href="#cam" x="725" y="645"/><use href="#eye" x="701" y="668"/><use href="#cam" x="725" y="668"/>
</g>
<rect x="450" y="666" width="230" height="3" rx="1.500" fill="#3a3a3a"/>
</g>

<!-- properties -->
<rect x="442" y="673" width="304" height="209" rx="4" fill="#2e2e2e"/>
<rect x="442" y="673" width="304" height="30" fill="#2b2b2b"/>
<rect x="442" y="703" width="34" height="179" fill="#1d1d1d"/>
<rect x="451" y="677" width="36" height="22" rx="5" fill="#262626"/>
<rect x="456" y="680" width="16" height="7" rx="3.500" fill="none" stroke="#e4e4e4" stroke-width="1.200"/><rect x="456" y="689" width="16" height="7" rx="3.500" fill="#e4e4e4"/><rect x="456" y="680" width="8" height="7" rx="3.500" fill="#e4e4e4"/>
<path d="M475 687L478 690 481 687" fill="none" stroke="#ddd" stroke-width="1.200"/>
<rect x="522" y="677" width="135" height="21" rx="4" fill="#1d1d1d"/>
<circle cx="537" cy="685" r="5" fill="none" stroke="#ddd" stroke-width="1.300"/><path d="M533 690L527 695" stroke="#ddd" stroke-width="1.300"/>
<rect x="717" y="677" width="21" height="22" rx="5" fill="#1f1f1f"/><path d="M724 687L727.500 690.500 731 687" fill="none" stroke="#ddd" stroke-width="1.200"/>
<path d="M453 725V720M453 730H457V736H453Q452 733 453 730ZM461 720V724Q463 726 465 724V720 M467 720V724Q465 728 464.500 728V736H462V728Q460 727 460 724" stroke="#ccc" fill="#ccc" stroke-width="1"/>
<path d="M453 762V760H458L460 763H464L466 760H469V775H453Z" fill="#ccc"/><rect x="455" y="766" width="9" height="6" fill="#444"/>
<path d="M452 793H469V801H452Z" fill="#ccc"/><rect x="454" y="799" width="13" height="9" fill="#ccc"/><path d="M456 806L460 801 465 806Z" fill="#444"/><rect x="452" y="793" width="17" height="2" fill="#fff"/>
<path d="M456 825H469V836H456Z" fill="#222" stroke="#ccc"/><path d="M453 828V840H465" fill="none" stroke="#ccc" stroke-width="1.200"/><path d="M458 834L461 829 464 832 466 830 468 835Z" fill="#ccc"/>
<path d="M455 870Q452 862 458 855L461 863Q462 870 455 870Z" fill="#ccc"/><circle cx="465" cy="857" r="2" fill="#ccc"/><circle cx="463" cy="868" r="4" fill="none" stroke="#ccc" stroke-width="1.300"/>
<!-- path -->
<path d="M489 720V716H493M501 716H505V720M505 727V731H501M493 731H489V727" fill="none" stroke="#ccc"/><rect x="492.500" y="719" width="9" height="9" fill="#e8e8e8"/>
<text class="row" x="516" y="728" style="fill:#d2d2d2">Light.031</text><path d="M590 719L595 724 590 729" fill="none" stroke="#ccc" stroke-width="1.200"/>
<g fill="none" stroke="#ccc" stroke-width="1.200"><circle cx="615" cy="723" r="7" stroke-dasharray="17 3 20 3"/><path d="M615 725V729M615 730V732"/></g><circle cx="615" cy="723" r="1.400" fill="#ccc"/>
<text class="row" x="634" y="728" style="fill:#d2d2d2">Light.001</text>
<path d="M719 730L725 724 724 720 728 717 734 723 731 727 727 726 721 732" fill="none" stroke="#888" stroke-width="1.200"/>
<!-- name -->
<rect x="486" y="755" width="251" height="21" rx="4" fill="#2a2a2a"/>
<rect x="522" y="755" width="193" height="21" fill="#1d1d1d"/>
<path d="M715 755H733Q737 755 737 759V772Q737 776 733 776H715Z" fill="#545454"/>
<path d="M721 760Q726 760 726 758 726 760 733 760V767Q732 772 726 774 720 772 720 767V760Z" fill="none" stroke="#999" stroke-width="1.200"/>
<g fill="none" stroke="#ddd" stroke-width="1.200"><circle cx="498" cy="765" r="7" stroke-dasharray="17 3 20 3"/><path d="M498 767V771M498 772V774"/></g><circle cx="498" cy="765" r="1.400" fill="#ddd"/><path d="M511 765L514 768 517 765" fill="none" stroke="#ddd" stroke-width="1.200"/>
<text class="row" x="530" y="770" style="fill:#d2d2d2">Light.001</text>
<!-- preview -->
<rect x="485" y="788" width="252" height="94" rx="4" fill="#3c3c3c"/>
<path d="M494 800L499 804.500 504 800" fill="none" stroke="#ccc" stroke-width="1.100"/>
<text class="cn" x="509" y="808" style="fill:#d5d5d5">预览</text>
<path d="M717 800H729M717 804H729" stroke="#888" stroke-dasharray="1.300 1.300" stroke-width="1.300"/>
<rect x="741" y="714" width="4" height="108" rx="2" fill="#3b3b3b"/>
<g clip-path="url(#prev)">
<g filter="url(#noise)">
<rect x="490" y="825" width="240" height="60" fill="#f2f2f2"/>
<path fill="#a8a8a8" d="M479 827H501L496 834H473ZM523 827H545L542 834H519ZM567 827H589L588 834H565ZM611 827H633L634 834H611ZM655 827H677L680 834H657ZM699 827H721L726 834H703Z
M496 834H519L511 845H486ZM542 834H565L561 845H536ZM588 834H611V845H586ZM634 834H657L661 845H636ZM680 834H703L711 845H686ZM726 834H749L761 845H736Z
M461 845H486L479 857H452ZM511 845H536L531.500 857H505ZM561 845H586L584.500 857H558ZM611 845H636L637.500 857H611ZM661 845H686L690.500 857H664ZM711 845H736L743.500 857H717Z
M478.500 857H505L499 869H471ZM531.500 857H558L555 869H527ZM584.500 857H611V869H583ZM637.500 857H664L667 869H639ZM690.500 857H717L723 869H695Z
M443 869H471L461 882H431ZM499 869H527L521 882H491ZM555 869H583L581 882H551ZM611 869H639L641 882H611ZM667 869H695L701 882H671ZM723 869H751L761 882H731Z"/>
</g>
</g>
</svg>
</body></html>
